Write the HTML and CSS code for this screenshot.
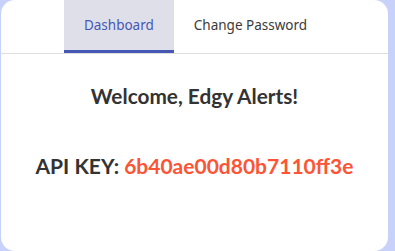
FILE: index.html
```html
<!DOCTYPE html>
<html>
<head>
<meta charset="utf-8">
<link rel="stylesheet" href="styles.css">
</head>
<body>
<div class="card">
  <nav class="tabs">
    <div class="tab active">Dashboard</div>
    <div class="tab">Change Password</div>
  </nav>
  <main class="content">
    <h2 class="welcome">Welcome, Edgy Alerts!</h2>
    <p class="api">API KEY: <span class="key">6b40ae00d80b7110ff3e</span></p>
  </main>
</div>
</body>
</html>
```
FILE: styles.css
```css
html, body {
  margin: 0;
  padding: 0;
  height: 100%;
}
body {
  background: #c7d1fa;
  overflow: hidden;
}
.card {
  margin-left: 1px;
  width: 387px;
  height: 251px;
  background: #fff;
  border-radius: 14px;
  box-sizing: border-box;
}
.tabs {
  display: flex;
  justify-content: center;
  border-bottom: 1px solid #dedede;
  padding-left: 2px;
}
.tab {
  height: 50px;
  padding: 0 20px;
  display: flex;
  align-items: center;
  font-family: "Noto Sans", sans-serif;
  font-size: 13.5px;
  color: #3a3a3a;
  border-bottom: 3px solid transparent;
}
.tab.active {
  background: #dfdfea;
  color: #4558b4;
  border-bottom-color: #4558b4;
}
.content {
  text-align: center;
  font-family: Lato, sans-serif;
  color: #333;
}
.welcome {
  margin: 0;
  padding-top: 29px;
  font-size: 20.8px;
  font-weight: 700;
  line-height: 26px;
}
.api {
  margin: 0;
  padding-top: 44px;
  font-size: 21px;
  font-weight: 700;
  line-height: 26px;
}
.key {
  color: #fd5435;
}
```
